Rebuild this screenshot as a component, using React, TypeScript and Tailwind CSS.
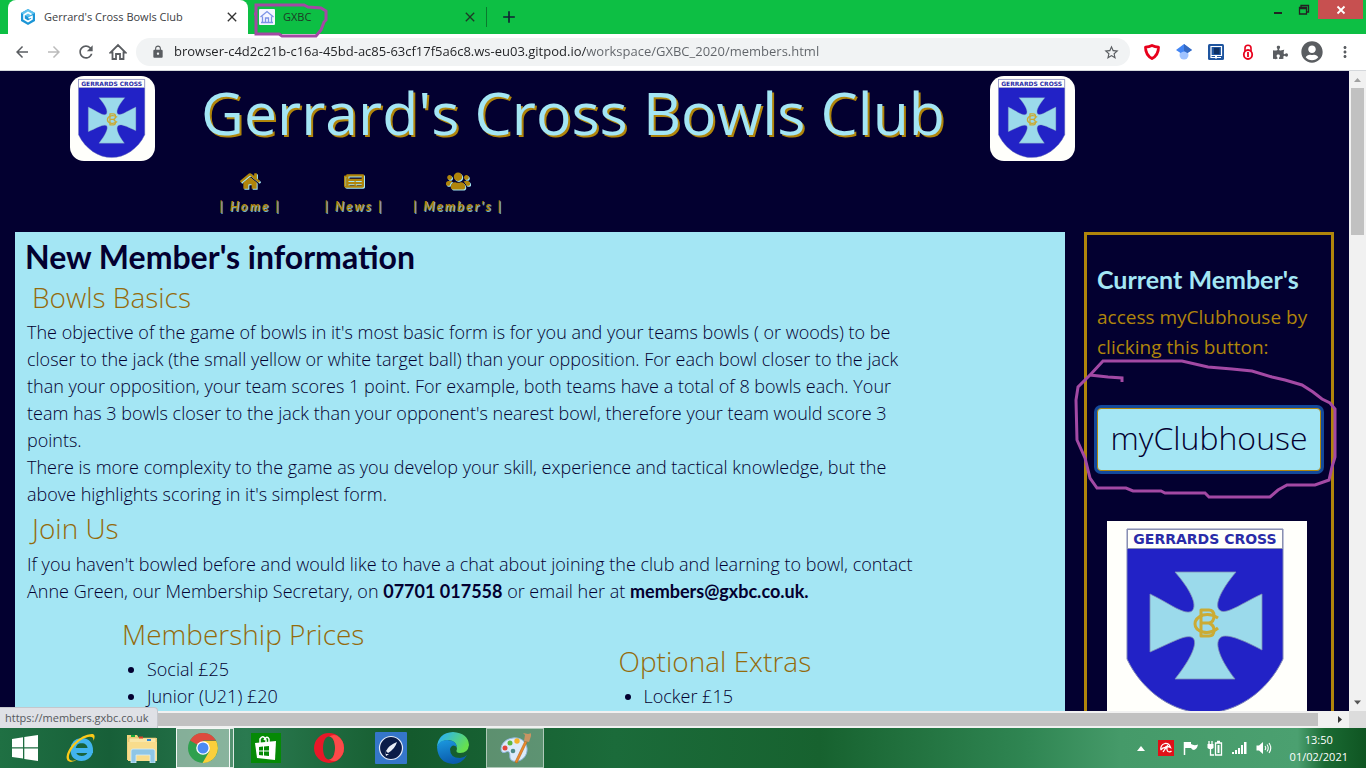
import React from "react";
import { FaHome, FaNewspaper, FaUsers, FaPuzzlePiece, FaUserCircle } from "react-icons/fa";
import { MdArrowBack, MdArrowForward, MdRefresh, MdLock, MdStarBorder, MdMoreVert, MdClose, MdAdd } from "react-icons/md";

const HEAD_FONT = "font-['Lato','Open_Sans',sans-serif]";

function Crest({ className }: { className: string }) {
  return (
    <svg viewBox="0 0 200 200" className={className} role="img" aria-label="Gerrards Cross crest">
      <rect width="200" height="200" fill="#fffffb" />
      <path d="M20 8H176V138C160 172 128 192 98 192C68 192 36 172 20 138Z" fill="#2222c6" stroke="#7f86b8" strokeWidth="1" />
      <rect x="20.500" y="8.500" width="155" height="19" fill="#fffffb" stroke="#8a90b0" strokeWidth="1" />
      <text x="98" y="23" textAnchor="middle" fontSize="14" fontWeight="700" fontFamily="DejaVu Sans, sans-serif" fill="#2a2ca8">
        GERRARDS CROSS
      </text>
      <path
        d="M68 51H129C113 70 106 86 114 90C121 93 137 81 155 73V129C132 117 118 112 113 117C107 123 114 140 128 158H68C84 138 91 122 86 117C80 112 64 122 43 131V73C62 82 78 95 85 90C91 84 83 68 68 51Z"
        fill="#9bdaeb"
        stroke="#7f8fb5"
        strokeWidth="0.800"
      />
      <g fill="none" stroke="#cbab33" strokeWidth="3" strokeLinejoin="round">
        <path d="M94 89H102Q107 89 107 95Q107 101 102 102Q107 104 107 109Q107 115 102 115H94Z M94 102H102" />
        <path d="M111 97Q104 92 96 94Q88 97 88 103Q88 109 96 111Q104 113 111 107" />
      </g>
    </svg>
  );
}

function NavItem({ label, children }: { label: string; children: React.ReactNode }) {
  return (
    <a href="#" className="flex flex-col items-center gap-[7px] text-[#b0850b]">
      <span className="text-xl drop-shadow-[1px_1px_0_#a4e6f4]">{children}</span>
      <span className={`${HEAD_FONT} whitespace-nowrap text-[13px] leading-4 font-bold italic tracking-[2px] [text-shadow:1px_1px_0_#6fb3c4]`}>
        | {label} |
      </span>
    </a>
  );
}

function TabStrip() {
  return (
    <div className="flex h-[34px] shrink-0 bg-[#0dbf44] pl-2 text-[11px] text-[#3c4043]">
      <div className="flex w-60 items-center rounded-t-lg bg-white pl-3 pr-2">
        <svg viewBox="0 0 16 16" className="size-4">
          <path d="M8 0L15 4V12L8 16L1 12V4Z" fill="#1b95d6" />
          <path d="M8 0L15 4L8 8L1 4Z" fill="#5fc3ef" />
          <path d="M11.500 5.500L8 3.500L4 6V10L8 12.500L12 10V7.500L8.500 9" fill="none" stroke="#fff" strokeWidth="1.600" />
        </svg>
        <span className="ml-2 flex-1 whitespace-nowrap">Gerrard's Cross Bowls Club</span>
        <button aria-label="Close tab"><MdClose className="size-4 text-[#333]" /></button>
      </div>
      <div className="relative flex w-[238px] items-center pl-[11px] pr-2 text-[#1d3a26]">
        <svg viewBox="0 0 16 16" className="size-4">
          <rect width="16" height="16" rx="1" fill="#f4f6ff" />
          <path d="M1.500 8L8 2.500L14.500 8M3.500 7.500V13.500H12.500V7.500M6.500 13V9H9.500V13M2 13.500H14" fill="none" stroke="#7c93e6" strokeWidth="1.300" />
        </svg>
        <span className="ml-2 flex-1">GXBC</span>
        <button aria-label="Close tab"><MdClose className="size-4" /></button>
        <svg className="pointer-events-none absolute top-0 left-0 z-10 h-10 w-24 overflow-visible" viewBox="0 0 96 40">
          <path d="M6 14H8V5H56L60 7L73 8L78 11V20L76 22L73 30L68 36H34L31 34H8V14" fill="none" stroke="#a349a4" strokeWidth="3" />
        </svg>
      </div>
      <div className="my-auto h-5 w-px bg-[#0a7a2e]" />
      <button aria-label="New tab" className="ml-3 text-[#123]"><MdAdd className="size-5" /></button>
      <div className="ml-auto flex items-start pr-[3px] text-[#222]">
        <button aria-label="Minimise" className="flex h-5 w-7 items-center justify-center">
          <svg viewBox="0 0 10 10" className="size-[10px]"><path d="M1 7H9V9H1Z" fill="#222" /></svg>
        </button>
        <button aria-label="Restore" className="mr-[2px] flex h-5 w-6 items-center justify-center">
          <svg viewBox="0 0 12 12" className="size-3"><path d="M3 3V1.500H10.500V8H9M1.500 3.500H8.500V10H1.500ZM1.500 4.500H8.500" fill="none" stroke="#222" strokeWidth="1.300" /></svg>
        </button>
        <button aria-label="Close" className="flex h-[19px] w-[45px] items-center justify-center bg-[#c75050] text-white">
          <svg viewBox="0 0 10 10" className="size-[10px]"><path d="M1.500 1.500L8.500 8.500M8.500 1.500L1.500 8.500" stroke="#fff" strokeWidth="1.800" /></svg>
        </button>
      </div>
    </div>
  );
}

function Toolbar() {
  return (
    <div className="flex h-[37px] shrink-0 items-center border-b border-[#d5d8dc] bg-white pl-[6px] text-[#5a5d61]">
      <button aria-label="Back" className="flex w-8 justify-center"><MdArrowBack className="size-[18px]" /></button>
      <button aria-label="Forward" className="flex w-8 justify-center text-[#bbb]"><MdArrowForward className="size-[18px]" /></button>
      <button aria-label="Reload" className="flex w-8 justify-center"><MdRefresh className="size-5" /></button>
      <button aria-label="Home" className="flex w-8 justify-center">
        <svg viewBox="0 0 18 18" className="size-[18px]"><path d="M3.500 9.500H1.500L9 2L16.500 9.500H14.500V16H11V11H7V16H3.500Z" fill="none" stroke="#5a5d61" strokeWidth="1.800" /></svg>
      </button>
      <div className="ml-[2px] flex h-7 flex-1 items-center rounded-full bg-[#f1f3f4] pl-[15px] pr-[10px]">
        <MdLock className="size-[14px]" />
        <input
          aria-label="Address"
          readOnly
          defaultValue="browser-c4d2c21b-c16a-45bd-ac85-63cf17f5a6c8.ws-eu03.gitpod.io/workspace/GXBC_2020/members.html"
          className="ml-[9px] flex-1 bg-[linear-gradient(90deg,#202124_412px,#5f6368_412px)] bg-clip-text text-[13px] text-transparent outline-none"
        />
        <button aria-label="Bookmark"><MdStarBorder className="size-[17px]" /></button>
      </div>
      <div className="ml-[6px] flex items-center">
        <span className="flex w-8 justify-center">
          <svg viewBox="0 0 16 16" className="size-4"><path d="M8 1.500Q11 3 14.500 3.200Q14.500 11 8 14.500Q1.500 11 1.500 3.200Q5 3 8 1.500Z" fill="#fff" stroke="#e8001c" strokeWidth="2.800" strokeLinejoin="round" /></svg>
        </span>
        <span className="flex w-8 justify-center">
          <svg viewBox="0 0 16 16" className="size-4"><circle cx="8" cy="11" r="4.500" fill="#a0c3ff" /><path d="M8 0L16 6L11.500 9Q8 6 4.500 9L0 6Z" fill="#4285f4" /><path d="M8 0L16 6L11.500 9L8 6.800Z" fill="#356ac3" /></svg>
        </span>
        <span className="flex w-8 justify-center">
          <svg viewBox="0 0 16 16" className="size-4"><rect width="16" height="16" rx="1.500" fill="#1f559f" /><path d="M13.500 2.500V11.500H3V2.500ZM3 11.500V13.500H7M9 13.500H13" fill="none" stroke="#fff" strokeWidth="1.200" /><path d="M6 4H11.500V10H6Z" fill="#0d2f62" /><path d="M7 11V15L8 14L9 15V11Z" fill="#fff" /></svg>
        </span>
        <span className="flex w-8 justify-center">
          <svg viewBox="0 0 16 16" className="size-4"><path d="M5 7V4Q5 1.200 8 1.200Q11 1.200 11 4V7" fill="none" stroke="#e8001c" strokeWidth="1.600" /><ellipse cx="8" cy="10.500" rx="4.200" ry="4.500" fill="#fff" stroke="#e8001c" strokeWidth="1.800" /><path d="M8 8V13" stroke="#e8001c" strokeWidth="1.800" /></svg>
        </span>
        <span className="flex w-8 justify-center"><FaPuzzlePiece className="size-[15px]" /></span>
        <span className="flex w-8 justify-center"><FaUserCircle className="size-[22px]" /></span>
        <button aria-label="Menu" className="flex w-[38px] justify-center pr-1"><MdMoreVert className="size-[18px]" /></button>
      </div>
    </div>
  );
}

const H3 = "text-[28px] leading-10 font-light text-[#946b0c]";

function Page() {
  return (
    <div className="flex min-w-0 flex-1 flex-col overflow-hidden bg-[#030030] text-[#030030]">
      <header className="shrink-0 pt-[5px]">
        <div className="flex items-center pl-[70px]">
          <Crest className="size-[85px] shrink-0 rounded-[14px]" />
          <h1 className="ml-[46px] whitespace-nowrap pb-3 text-[59px] leading-[73px] text-[#a4e6f4] [text-shadow:2px_2px_0_#b0850b]">
            Gerrard's Cross Bowls Club
          </h1>
          <Crest className="ml-[45px] size-[85px] shrink-0 rounded-[14px]" />
        </div>
        <nav className="ml-[198px] mt-[10px] grid w-[312px] grid-cols-3 pb-[18px]">
          <NavItem label="Home"><FaHome /></NavItem>
          <NavItem label="News"><FaNewspaper /></NavItem>
          <NavItem label="Member's"><FaUsers className="w-6" /></NavItem>
        </nav>
      </header>
      <div className="flex min-h-0 flex-1 gap-[19px] px-[15px]">
        <main className="min-w-0 flex-1 bg-[#a4e6f4] pt-[5px] text-lg leading-[27px] font-light">
          <h2 className={`${HEAD_FONT} pl-[10px] text-[32px] leading-10 font-bold`}>New Member's information</h2>
          <h3 className={`${H3} pl-[17px]`}>Bowls Basics</h3>
          <p className="mt-[2px] pl-3">
            The objective of the game of bowls in it's most basic form is for you and your teams bowls ( or woods) to be<br />
            closer to the jack (the small yellow or white target ball) than your opposition. For each bowl closer to the jack<br />
            than your opposition, your team scores 1 point. For example, both teams have a total of 8 bowls each. Your<br />
            team has 3 bowls closer to the jack than your opponent's nearest bowl, therefore your team would score 3<br />
            points.<br />
            There is more complexity to the game as you develop your skill, experience and tactical knowledge, but the<br />
            above highlights scoring in it's simplest form.
          </p>
          <h3 className={`${H3} pl-[17px]`}>Join Us</h3>
          <p className="mt-[3px] pl-3">
            If you haven't bowled before and would like to have a chat about joining the club and learning to bowl, contact<br />
            Anne Green, our Membership Secretary, on <strong className={`${HEAD_FONT} font-bold`}>07701 017558</strong> or email her at{" "}
            <strong className={`${HEAD_FONT} font-bold`}>members@gxbc.co.uk.</strong>
          </p>
          <div className="mt-[9px] grid grid-cols-2 gap-x-12 pl-[105px]">
            <section>
              <h3 className={`${H3} pl-[2px]`}>Membership Prices</h3>
              <ul className="mt-[2px] list-disc pl-[27px]">
                <li>Social £25</li>
                <li>Junior (U21) £20</li>
              </ul>
            </section>
            <section className="mt-[27px]">
              <h3 className={`${H3} pl-[2px]`}>Optional Extras</h3>
              <ul className="mt-[2px] list-disc pl-[27px]">
                <li>Locker £15</li>
              </ul>
            </section>
          </div>
        </main>
        <aside className="relative w-[250px] shrink-0 border-3 border-b-0 border-[#b0850b] px-[10px] pt-[29px]">
          <h2 className={`${HEAD_FONT} text-[25px] leading-[30px] font-bold text-[#a4e6f4]`}>Current Member's</h2>
          <p className="mt-2 whitespace-nowrap text-[19px] leading-[30px] text-[#b0850b]">
            access myClubhouse by<br />clicking this button:
          </p>
          <button className="mt-[46px] flex h-[63px] w-full items-center justify-center rounded border border-[#b0850b] bg-[#a4e6f4] pb-1 text-[32px] font-light ring-3 ring-[#14499a]">
            myClubhouse
          </button>
          <Crest className="mt-[50px] ml-[10px] size-[200px]" />
          <svg className="pointer-events-none absolute -top-[3px] -left-[3px] h-[280px] w-[250px] overflow-visible" viewBox="0 0 250 280">
            <path
              d="M38 150V146L24 145L6 143L19 129H98L124 135L148 137L168 139L188 145L201 148L218 153L229 160L238 167L246 171L251 177V225L248 235L245 248L231 253H203L194 258L186 265H125L121 261H81L77 259H49L42 256H13L6 246L1 226L-7 208L-8 168L-6 155L6 143"
              fill="none"
              stroke="#a349a4"
              strokeWidth="3"
            />
          </svg>
        </aside>
      </div>
    </div>
  );
}

function Arrow({ d }: { d: string }) {
  return (
    <svg viewBox="0 0 17 17" className="size-[17px] shrink-0">
      <path d={d} fill="currentColor" />
    </svg>
  );
}

function Taskbar() {
  return (
    <footer className="flex h-10 shrink-0 items-stretch bg-[linear-gradient(90deg,#1f7043_0%,#175f38_8%,#2a7a50_18%,#145a2d_30%,#1b6b3a_45%,#17622f_60%,#2f8552_75%,#459a69_82%,#4ba070_95%,#1a6a33_97%,#0f5522_100%)]">
      <button aria-label="Start" className="flex w-[50px] items-center justify-center">
        <svg viewBox="0 0 26 26" className="size-[26px]"><path d="M0 4L11 2.300V12.300H0ZM12.300 2.100L26 0V12.300H12.300ZM0 13.500H11V23.600L0 22ZM12.300 13.500H26V26L12.300 23.900Z" fill="#fff" /></svg>
      </button>
      <button aria-label="Internet Explorer" className="flex w-[62px] items-center justify-center">
        <svg viewBox="0 0 32 32" className="size-8">
          <path d="M25.500 20.500Q22.500 26.500 16.500 26.500Q8 26 8 17.500Q8.500 9 16.500 8.500Q25.500 9 25.500 18.500H9" fill="none" stroke="#41b4ee" strokeWidth="5" />
          <path d="M2.500 28.500Q-1 23 8 12Q19 1 28 2Q31 3 28.500 9Q29 4 23 5Q14 7 7 17Q2 25 5 28Q8 30 13 27Q6 32 2.500 28.500Z" fill="#fbc918" />
        </svg>
      </button>
      <button aria-label="File Explorer" className="flex w-[60px] items-center justify-center">
        <svg viewBox="0 0 32 30" className="h-[30px] w-8">
          <path d="M1 4V2H11L13 5H31V27H1Z" fill="#f2d27c" />
          <path d="M3 5H30V27H3Z" fill="#f9e6a6" stroke="#d9b65a" strokeWidth="0.600" />
          <path d="M2 9H31V28H2Z" fill="#f8dc8c" />
          <rect x="5" y="2" width="4" height="2" fill="#19a83a" />
          <rect x="13" y="3.500" width="4" height="2" fill="#d9402a" />
          <rect x="21" y="6" width="4" height="2" fill="#2a86d9" />
          <path d="M5 30V18Q5 16 7 16H27Q29 16 29 18V30H24V22H10V30Z" fill="#8fc6e6" stroke="#d5edfa" strokeWidth="0.800" />
        </svg>
      </button>
      <div className="flex w-[62px] items-stretch pl-1">
        <button aria-label="Chrome" className="flex w-[54px] items-center justify-center border border-white/90 bg-white/45">
          <svg viewBox="0 0 30 30" className="size-[30px]">
            <circle cx="15" cy="15" r="15" fill="#2fa04e" />
            <path d="M15 15L2 7.500A15 15 0 0 1 28 7.500H15Z" fill="#dd4b3e" />
            <path d="M15 8H28.200A15 15 0 0 1 14.500 30L21.500 18Z" fill="#fbcf3b" />
            <circle cx="15" cy="15" r="6.800" fill="#fff" />
            <circle cx="15" cy="15" r="5.500" fill="#4a8af4" />
          </svg>
        </button>
        <span className="w-1 border-y border-r border-white/80 bg-white/20" />
      </div>
      <button aria-label="Store" className="flex w-[64px] items-center justify-center">
        <svg viewBox="0 0 30 30" className="size-[30px]">
          <rect width="30" height="30" fill="#058a05" />
          <path d="M4 10L25 8L24 27L6 25Z" fill="#fff" />
          <path d="M9 10V6Q12 1 15 7V10M13 7Q16 2 18 6V10" fill="none" stroke="#fff" strokeWidth="1.500" />
          <path d="M8 14L12 13.500V17.500H8ZM13 13.400L18 13V17.500H13ZM8 18.500H12V22.500L8 22ZM13 18.500H18V23L13 22.500Z" fill="#058a05" />
        </svg>
      </button>
      <button aria-label="Opera" className="flex w-[62px] items-center justify-center">
        <svg viewBox="0 0 30 30" className="size-[30px]">
          <path d="M15 0A15 15 0 1 0 15 30A15 15 0 1 0 15 0ZM15 3.500C19 3.500 21 9 21 15C21 21 19 26.500 15 26.500C11 26.500 9 21 9 15C9 9 11 3.500 15 3.500Z" fill="#e81828" fillRule="evenodd" />
          <path d="M15 3.500Q19 1 23 2.500Q30 7 30 15Q30 23 23 27.500Q19 29 15 26.500C19 26.500 21 21 21 15C21 9 19 3.500 15 3.500Z" fill="#fb4a49" />
        </svg>
      </button>
      <button aria-label="Compass" className="flex w-[62px] items-center justify-center">
        <svg viewBox="0 0 32 32" className="size-8">
          <rect width="32" height="32" rx="1" fill="#3576ca" />
          <circle cx="16" cy="16" r="11.500" fill="#0a1c48" stroke="#e6edf8" strokeWidth="1.200" />
          <path d="M22 10Q14 13 11 19L13 21Q20 17 22 10ZM10 18L11 22L14 22L11 24Z" fill="#e9eef7" />
        </svg>
      </button>
      <button aria-label="Edge" className="flex w-[62px] items-center justify-center">
        <svg viewBox="0 0 32 32" className="size-8">
          <defs>
            <linearGradient id="edgeTop" x1="0" y1="0" x2="1" y2="0.500"><stop offset="0.200" stopColor="#2fb5e8" /><stop offset="1" stopColor="#66e04e" /></linearGradient>
            <linearGradient id="edgeLow" x1="0" y1="0" x2="0.300" y2="1"><stop offset="0" stopColor="#1c9ae0" /><stop offset="1" stopColor="#0a5cad" /></linearGradient>
          </defs>
          <path d="M0 15Q1 1 16 0Q31 1 32 13Q31 21 23 21Q18 21 20 17Q20 9 12 8Q3 8 0 15Z" fill="url(#edgeTop)" />
          <path d="M0 15Q2 8 10 8Q19 8 20 15Q15 11 13 17Q13 26 23 26Q27 26 30 23Q25 32 16 32Q1 31 0 15Z" fill="url(#edgeLow)" />
        </svg>
      </button>
      <button aria-label="Paint" className="ml-[2px] flex w-[58px] items-center justify-center border border-white/50 bg-white/30">
        <svg viewBox="0 0 32 32" className="size-8">
          <path d="M14 6C4 7 0 16 3 20C6 22 8 18 10 20C12 23 9 27 14 29C22 31 29 24 28 16C27 9 21 5 14 6Z" fill="#dcebfa" stroke="#8fb6de" strokeWidth="1" />
          <circle cx="6" cy="16" r="2.500" fill="#e2463c" />
          <circle cx="11" cy="11" r="2.500" fill="#5cb83e" />
          <circle cx="18" cy="9" r="2.700" fill="#f3b229" />
          <circle cx="14" cy="19" r="2.300" fill="#4d8a86" />
          <path d="M26 9L28 10L18 31L16 30Z" fill="#ec8a2c" stroke="#b9651a" strokeWidth="0.600" />
          <path d="M25 9L26 3L24 1L29 2L33 1L30 10Z" fill="#c99463" />
        </svg>
      </button>
      <div className="ml-auto flex items-center gap-[9px] pr-[18px] text-white">
        <svg viewBox="0 0 8 5" className="h-[5px] w-2"><path d="M0 5L4 0L8 5Z" fill="#fff" /></svg>
        <svg viewBox="0 0 16 16" className="ml-1 size-4"><rect width="16" height="16" fill="#e01018" /><path d="M3 10Q2 5 7 3.500Q11 3 12.500 7.500Q9 5.500 7 7.500Q4.500 7.500 3 10M9.500 5Q8 10 10 11.500Q12 12.500 13.500 11M8.500 7L5 12" fill="none" stroke="#fff" strokeWidth="1.300" /></svg>
        <svg viewBox="0 0 15 16" className="h-4 w-[15px]"><path d="M1.500 2V15" stroke="#fff" strokeWidth="1.500" /><path d="M2 2H8V4Q11 6 15 4.500Q14 9 11 10Q9 10 8 8H2Z" fill="#fff" /></svg>
        <svg viewBox="0 0 16 16" className="size-4"><path d="M2 1V4M5 1V4M3.500 8V15H7" fill="none" stroke="#fff" strokeWidth="1.300" /><path d="M0.500 4H6.500V8L5 9H2L0.500 8Z" fill="#fff" /><path d="M8.500 3H14.500V15H8.500ZM10 1.500H13" fill="none" stroke="#fff" strokeWidth="1.300" /><path d="M10.500 5H12.500V13H10.500Z" fill="#fff" /></svg>
        <svg viewBox="0 0 15 14" className="h-[14px] w-[15px]"><path d="M0 11H2V13H0ZM3 9H5V13H3ZM6 7H8V13H6ZM9 4H11V13H9ZM12 1H14.500V13H12Z" fill="#fff" /></svg>
        <svg viewBox="0 0 16 14" className="h-[14px] w-4"><path d="M0.500 4.500H3L7 1V13L3 9.500H0.500Z" fill="#fff" /><path d="M9 5Q10.500 7 9 9M11 3.500Q13.500 7 11 10.500M13 2Q16.500 7 13 12" fill="none" stroke="#fff" strokeWidth="1.100" /></svg>
        <div className="ml-[9px] text-center text-[11px] leading-[17px]">13:50<br />01/02/2021</div>
      </div>
    </footer>
  );
}

export default function App() {
  return (
    <div className="flex h-screen flex-col overflow-hidden font-['Open_Sans','Noto_Sans',sans-serif]">
      <TabStrip />
      <Toolbar />
      <div className="relative flex min-h-0 flex-1 flex-col">
        <div className="flex min-h-0 flex-1">
          <Page />
          <div className="flex w-[17px] shrink-0 flex-col items-center bg-[#f1f1f1] text-[#555]">
            <span className="text-[#a0a0a0]"><Arrow d="M5 11L8.500 7L12 11Z" /></span>
            <div className="h-[147px] w-[13px] bg-[#c1c1c1]" />
            <span className="mt-auto"><Arrow d="M5 6.500L8.500 10.500L12 6.500Z" /></span>
          </div>
        </div>
        <div className="flex h-[17px] shrink-0 items-center bg-[#f1f1f1] text-[#333]">
          <div className="h-[13px] flex-1 bg-[#c1c1c1]" />
          <span className="ml-[14px]"><Arrow d="M6 5L10 8.500L6 12Z" /></span>
          <div className="size-[17px] bg-[#dcdcdc]" />
        </div>
        <div className="absolute bottom-0 left-0 rounded-tr border-t border-r border-[#c4c7cc] bg-[#dfe1e6] py-px pr-2 pl-[5px] text-[11px] leading-[18px] text-[#55585c]">
          https://members.gxbc.co.uk
        </div>
      </div>
      <Taskbar />
    </div>
  );
}
